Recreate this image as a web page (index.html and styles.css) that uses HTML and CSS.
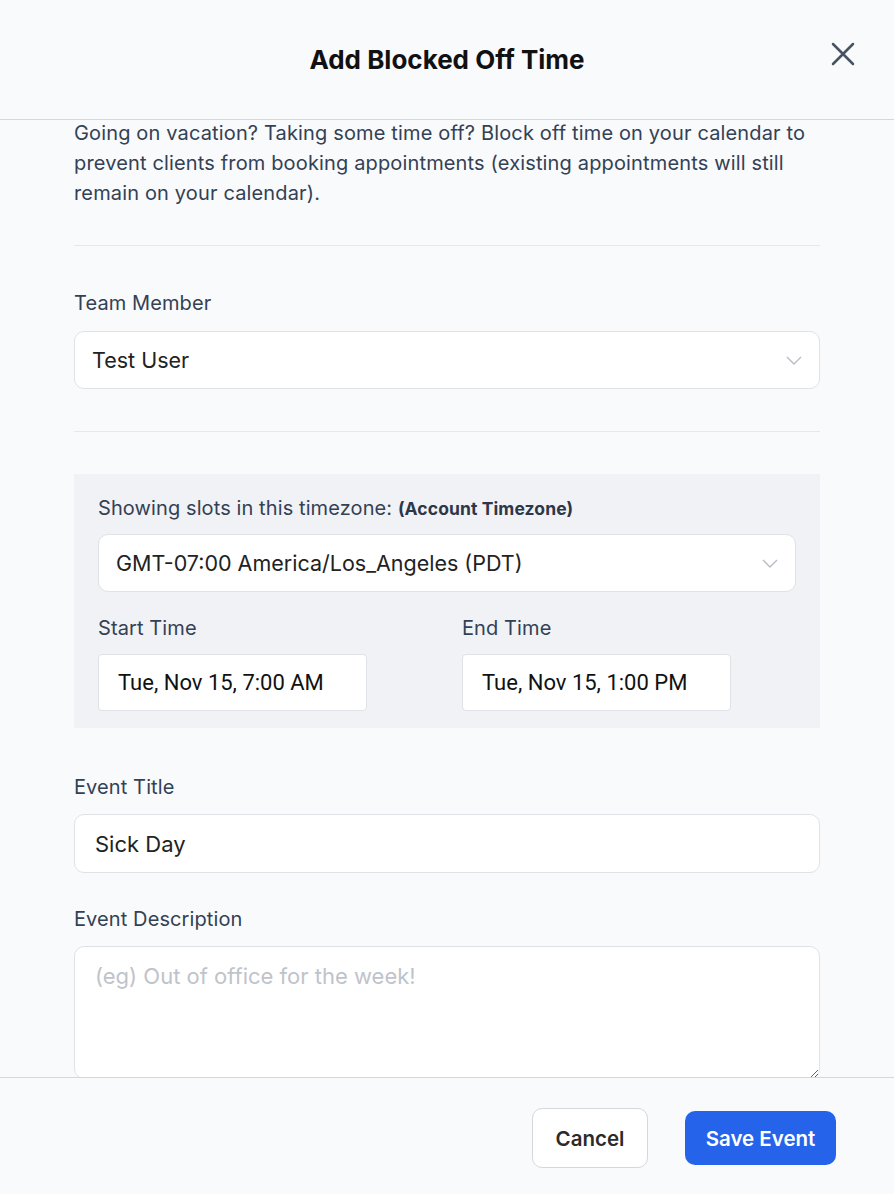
FILE: index.html
```html
<!DOCTYPE html>
<html lang="en">
<head>
<meta charset="utf-8">
<title>Add Blocked Off Time</title>
<link rel="stylesheet" href="styles.css">
</head>
<body>
<div class="modal">
  <header class="modal-header">
    <h1 class="modal-title">Add Blocked Off Time</h1>
    <button class="close-btn" aria-label="Close">
      <svg width="24" height="24" viewBox="0 0 24 24" fill="none" stroke="#475263" stroke-width="2.5" stroke-linecap="round"><path d="M2 2 L22 22 M22 2 L2 22"/></svg>
    </button>
  </header>
  <div class="modal-body">
    <div class="content">
      <p class="intro">Going on vacation? Taking some time off? Block off time on your calendar to prevent clients from booking appointments (existing appointments will still remain on your calendar).</p>
      <hr class="divider">
      <div class="field">
        <label class="label">Team Member</label>
        <div class="select">
          <span class="select-value">Test User</span>
          <svg class="chevron" width="16" height="9" viewBox="0 0 16 9" fill="none" stroke="#b8bcc4" stroke-width="1.4"><path d="M1 1 L8 8 L15 1"/></svg>
        </div>
      </div>
      <hr class="divider divider-2">
      <div class="tz-box">
        <div class="label">Showing slots in this timezone: <b class="tz-note">(Account Timezone)</b></div>
        <div class="select select-tz">
          <span class="select-value">GMT-07:00 America/Los_Angeles (PDT)</span>
          <svg class="chevron" width="16" height="9" viewBox="0 0 16 9" fill="none" stroke="#b8bcc4" stroke-width="1.4"><path d="M1 1 L8 8 L15 1"/></svg>
        </div>
        <div class="time-grid">
          <div class="time-col">
            <div class="label">Start Time</div>
            <div class="time-input">Tue, Nov 15, 7:00 AM</div>
          </div>
          <div class="time-col">
            <div class="label">End Time</div>
            <div class="time-input">Tue, Nov 15, 1:00 PM</div>
          </div>
        </div>
      </div>
      <div class="field field-title">
        <label class="label">Event Title</label>
        <div class="text-input">Sick Day</div>
      </div>
      <div class="field field-desc">
        <label class="label">Event Description</label>
        <textarea class="textarea" placeholder="(eg) Out of office for the week!"></textarea>
      </div>
    </div>
  </div>
  <footer class="modal-footer">
    <button class="btn btn-cancel">Cancel</button>
    <button class="btn btn-save">Save Event</button>
  </footer>
</div>
</body>
</html>
```

FILE: styles.css
```css
* { box-sizing: border-box; }
html, body { margin: 0; padding: 0; }
body {
  font-family: Inter, "Noto Sans", "Liberation Sans", sans-serif;
  background: #f9fafb;
  color: #334155;
}
.modal {
  height: 100vh;
  display: flex;
  flex-direction: column;
  background: #f9fafb;
}
.modal-header {
  flex: 0 0 120px;
  border-bottom: 1px solid #d4d7dd;
  display: flex;
  align-items: center;
  justify-content: center;
  position: relative;
}
.modal-title {
  margin: 0;
  font-size: 26px;
  font-weight: 700;
  color: #111111;
}
.close-btn {
  position: absolute;
  right: 39px;
  top: 42px;
  width: 24px;
  height: 24px;
  padding: 0;
  border: 0;
  background: transparent;
  display: flex;
}
.modal-body {
  flex: 1;
  overflow: hidden;
}
.content {
  padding: 0 74px;
}
.intro {
  margin: -2px 0 0;
  font-size: 20px;
  letter-spacing: 0.15px;
  line-height: 30px;
  color: #334155;
}
.divider {
  border: 0;
  border-top: 1px solid #e6e8ec;
  margin: 37px 0 0;
}
.divider-2 { margin-top: 42px; }
.label {
  font-size: 20px;
  letter-spacing: 0.1px;
  line-height: 28px;
  color: #334155;
}
.field { display: flex; flex-direction: column; gap: 14px; margin-top: 43px; }
.select {
  height: 58px;
  background: #ffffff;
  border: 1px solid #dfe2e6;
  border-radius: 10px;
  display: flex;
  align-items: center;
  justify-content: space-between;
  padding: 0 17px 0 17px;
}
.select-value {
  font-size: 21.5px;
  color: #222222;
}
.chevron { margin-top: 1px; }
.tz-box {
  margin-top: 42px;
  background: #f0f2f6;
  padding: 20px 24px 17px;
  display: flex;
  flex-direction: column;
}
.tz-note {
  font-size: 17.5px;
  font-weight: 700;
  color: #2d3748;
}
.select-tz { margin-top: 11px; }
.time-grid {
  margin-top: 22px;
  display: grid;
  grid-template-columns: 1fr 1fr;
  column-gap: 30px;
}
.time-col { display: flex; flex-direction: column; gap: 12px; }
.time-input {
  width: 269px;
  height: 57px;
  background: #ffffff;
  border: 1px solid #dfe2e6;
  border-radius: 4px;
  display: flex;
  align-items: center;
  padding-left: 19px;
  font-family: Roboto, "Liberation Sans", sans-serif;
  font-size: 22px;
  color: #111111;
}
.field-title { margin-top: 45px; gap: 13px; }
.text-input {
  height: 59px;
  background: #ffffff;
  border: 1px solid #dfe2e6;
  border-radius: 10px;
  display: flex;
  align-items: center;
  padding-left: 20px;
  font-size: 22px;
  color: #222222;
}
.field-desc { margin-top: 32px; gap: 13px; }
.textarea {
  display: block;
  width: 100%;
  height: 133px;
  background: #ffffff;
  border: 1px solid #dfe2e6;
  border-radius: 10px;
  padding: 14px 20px;
  font-family: Inter, "Noto Sans", sans-serif;
  font-size: 22px;
  line-height: 30px;
  color: #222222;
  resize: vertical;
}
.textarea::placeholder { color: #bfc3ca; }
.modal-footer {
  flex: 0 0 117px;
  border-top: 1px solid #d4d7dd;
  display: flex;
  align-items: center;
  justify-content: flex-end;
  gap: 37px;
  padding: 4px 58px 0 0;
  background: #f9fafb;
}
.btn {
  font-family: Inter, "Noto Sans", sans-serif;
  font-size: 20.5px;
  font-weight: 600;
  border-radius: 10px;
  cursor: pointer;
}
.btn-cancel {
  width: 116px;
  height: 60px;
  background: #ffffff;
  border: 1px solid #d4d7de;
  color: #2b2b2b;
}
.btn-save {
  width: 151px;
  height: 54px;
  background: #2563eb;
  border: 0;
  color: #ffffff;
}
```
